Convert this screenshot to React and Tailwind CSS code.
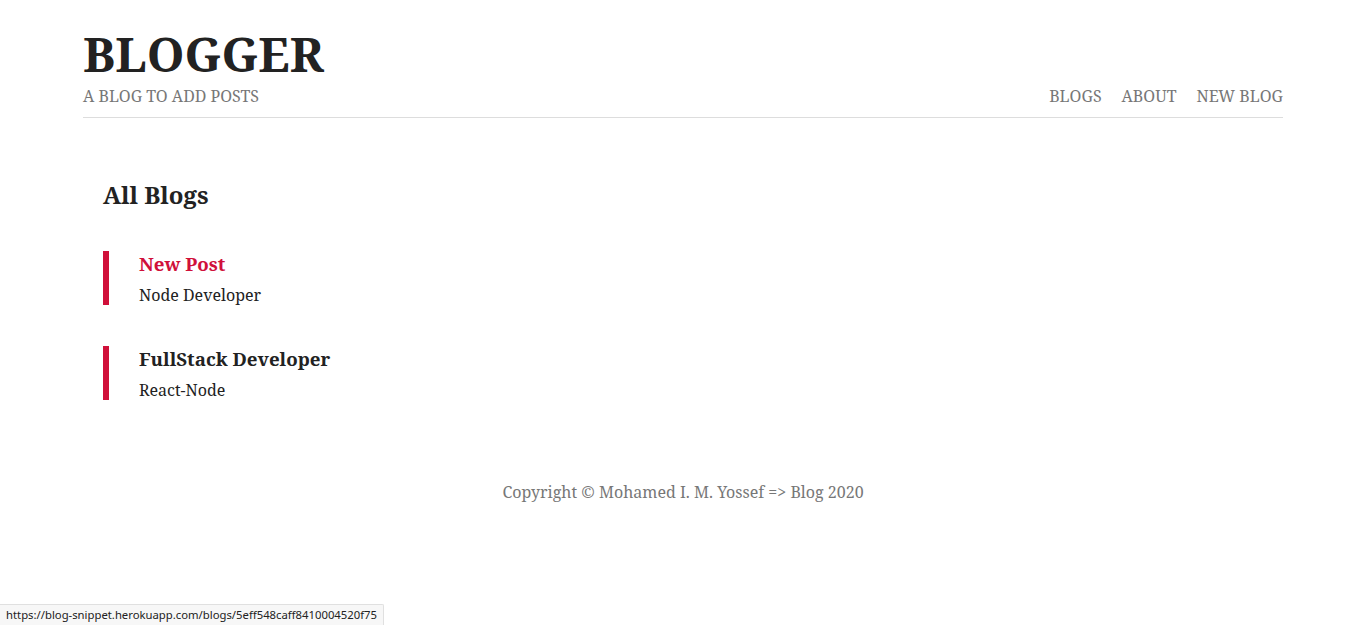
export default function App() {
  const serif = { fontFamily: '"Noto Serif", "DejaVu Serif", serif' };
  return (
    <div className="min-h-[625px] bg-white relative" style={serif}>
      <div className="w-[1200px] mx-auto">
        <header className="flex items-end justify-between border-b border-[#dddddd] pb-[10px] pt-[24px]">
          <div>
            <h1 className="text-[48px] leading-[60px] font-bold text-[#222222]">BLOGGER</h1>
            <p className="text-[16px] leading-[22px] text-[#777777] mt-[1px]">A BLOG TO ADD POSTS</p>
          </div>
          <nav className="flex gap-[20px] text-[16px] leading-[22px] text-[#777777]">
            <a>BLOGS</a>
            <a>ABOUT</a>
            <a>NEW BLOG</a>
          </nav>
        </header>
        <main className="px-[20px] pt-[61px]">
          <h2 className="text-[24px] leading-[32px] font-bold text-[#222222]">All Blogs</h2>
          <div className="mt-[40px] flex flex-col gap-[41px]">
            <div className="border-l-[6px] border-[#d0103a] pl-[30px]">
              <h3 className="text-[18.72px] leading-[26px] font-bold text-[#d0103a]">New Post</h3>
              <p className="text-[16px] leading-[20px] text-[#222222] mt-[8px]">Node Developer</p>
            </div>
            <div className="border-l-[6px] border-[#d0103a] pl-[30px]">
              <h3 className="text-[18.72px] leading-[26px] font-bold text-[#222222]">FullStack Developer</h3>
              <p className="text-[16px] leading-[20px] text-[#222222] mt-[8px]">React-Node</p>
            </div>
          </div>
          <footer className="text-center text-[16px] leading-[24px] text-[#777777] mt-[80px]">
            Copyright © Mohamed I. M. Yossef =&gt; Blog 2020
          </footer>
        </main>
      </div>
      <div
        className="absolute left-0 bottom-0 h-[21px] pl-[6px] pr-[6px] flex items-center bg-[#f7f7f7] border border-[#e0e0e0] border-l-0 border-b-0 text-[11.3px] text-[#222222] rounded-tr-[2px]"
        style={{ fontFamily: '"Noto Sans", "Liberation Sans", sans-serif' }}
      >
        https://blog-snippet.herokuapp.com/blogs/5eff548caff8410004520f75
      </div>
    </div>
  );
}
